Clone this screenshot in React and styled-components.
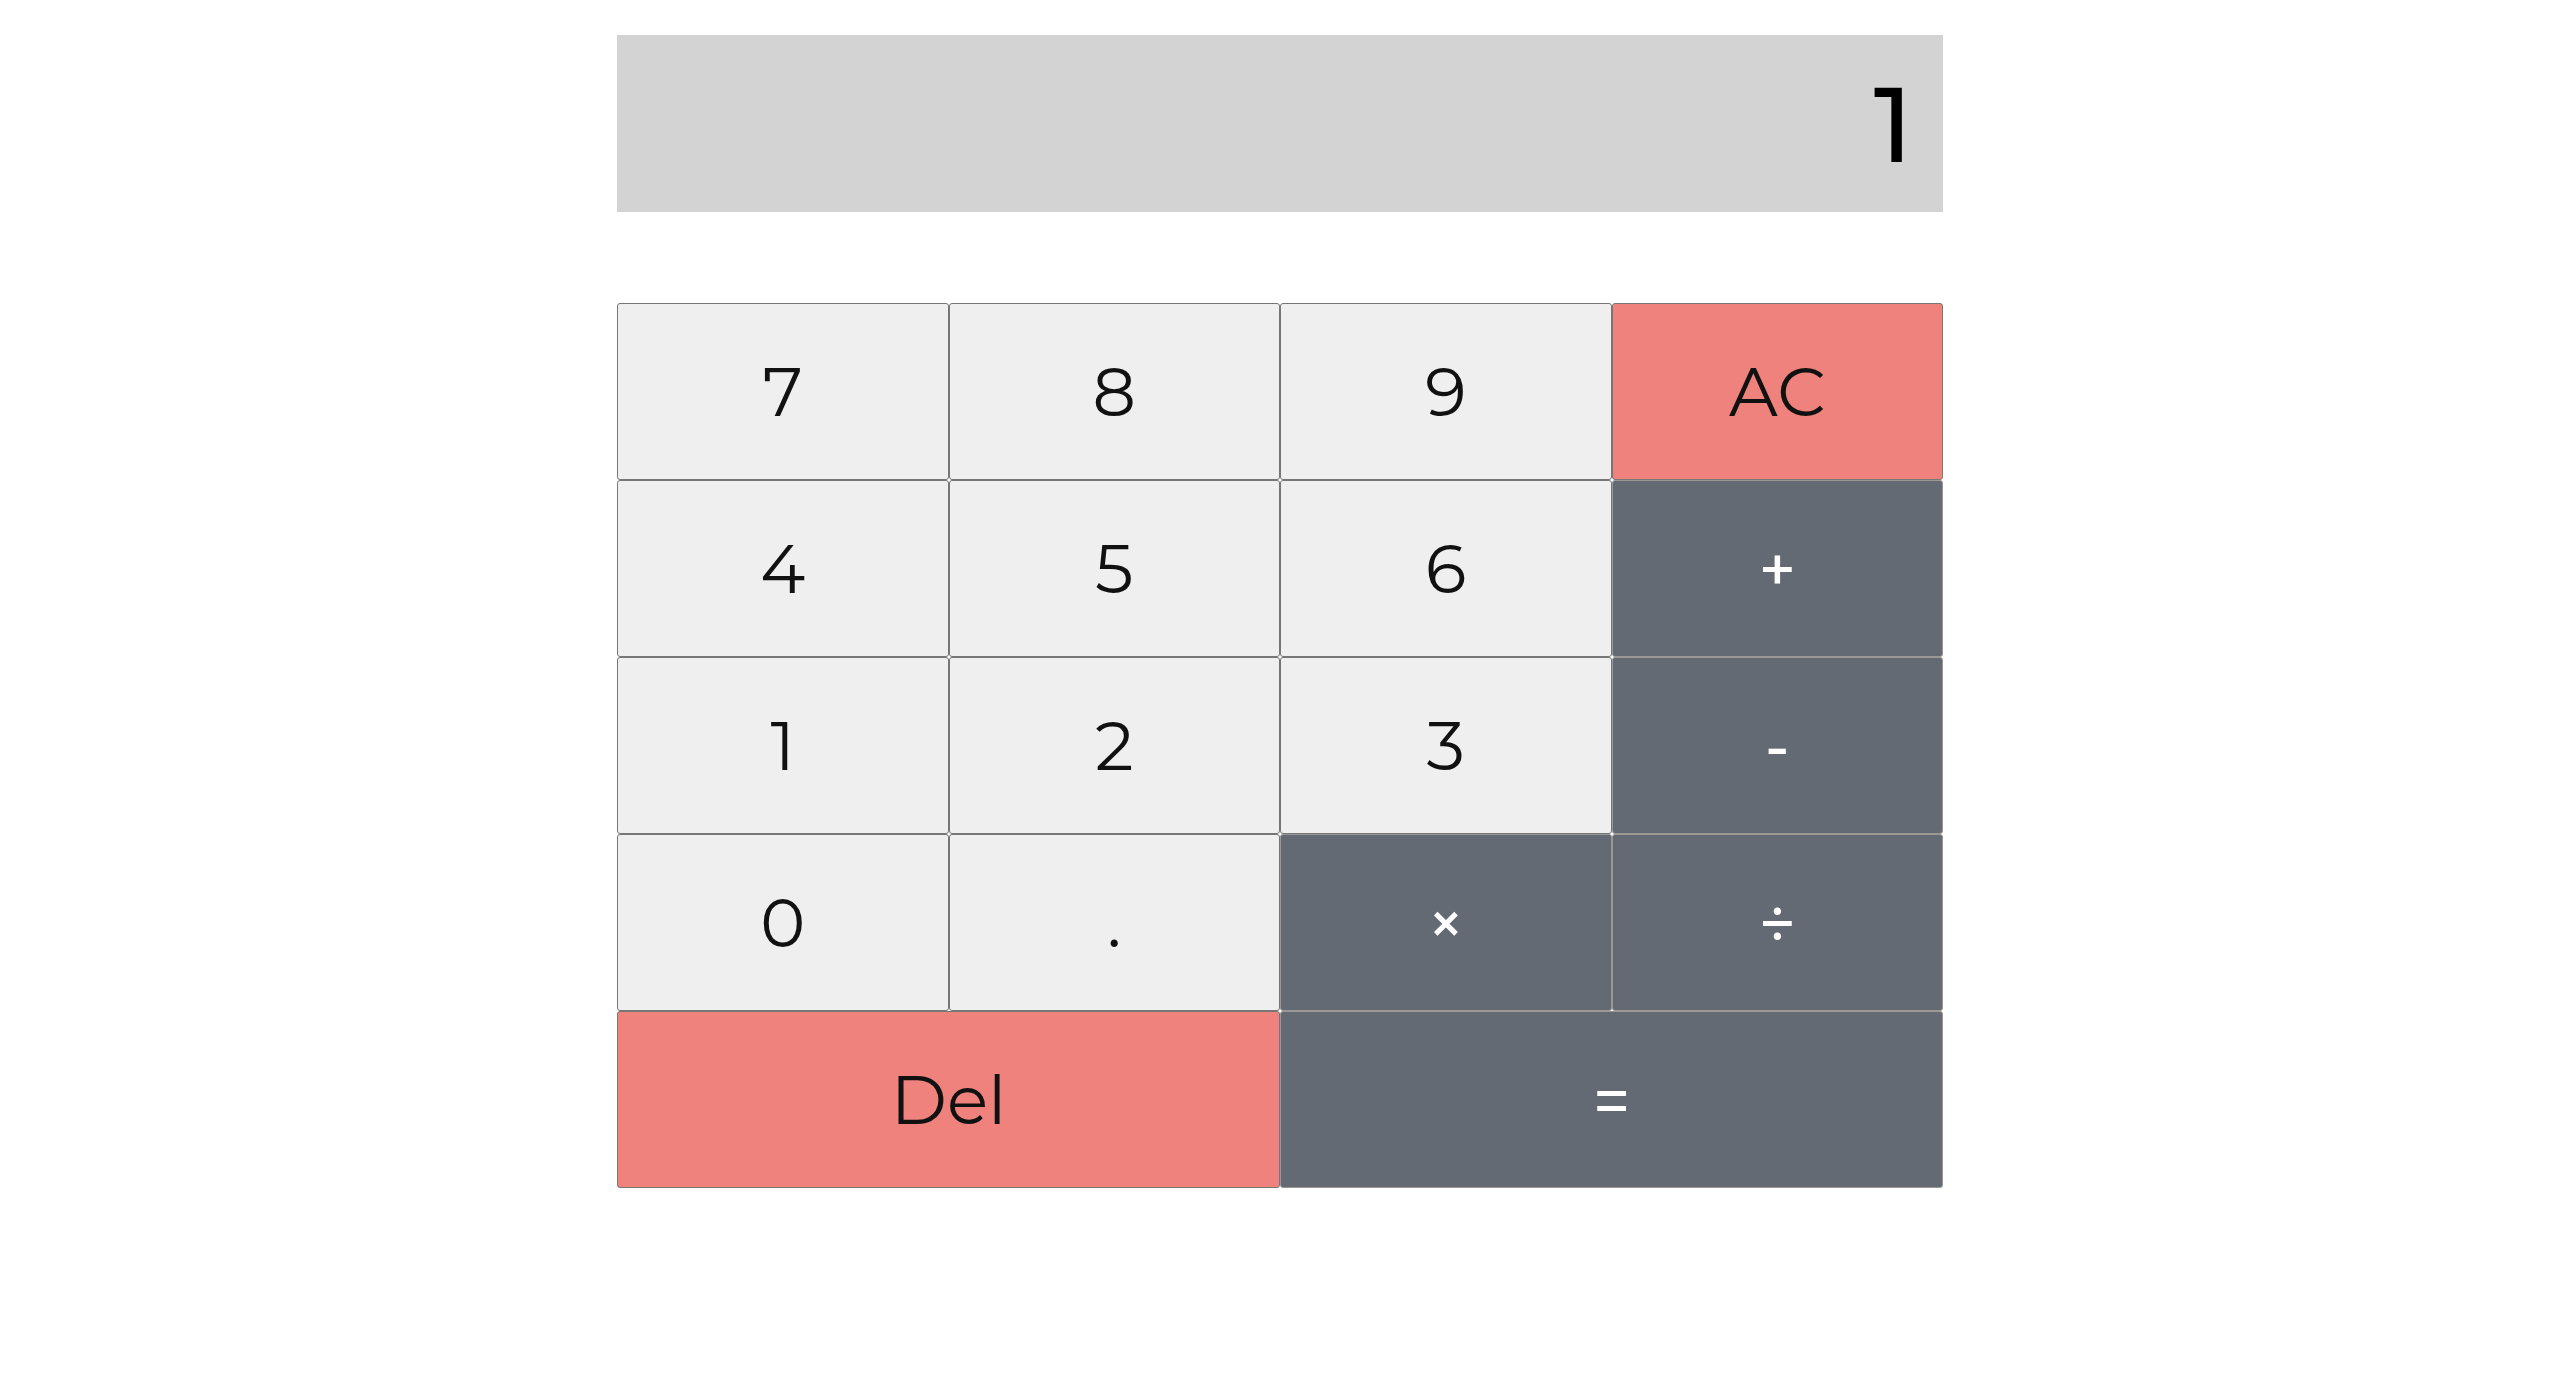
import React, { useState } from "react";
import styled, { createGlobalStyle } from "styled-components";

const GlobalStyle = createGlobalStyle`
    body {
        margin: 0;
        background: #fff;
        font-family: "Montserrat", "Inter", "Liberation Sans", sans-serif;
    }
`;

const Wrapper = styled.div`
    width: 1326px;
    margin: 35px auto 0;
`;

const Display = styled.div`
    height: 177px;
    background: #d3d3d3;
    display: flex;
    align-items: center;
    justify-content: flex-end;
    padding: 0 30px;
    box-sizing: border-box;
    font-size: 106px;
    font-weight: 500;
    color: #000;
    margin-bottom: 91px;
`;

const Keypad = styled.div`
    display: grid;
    grid-template-columns: repeat(4, 1fr);
    grid-auto-rows: 177px;
`;

const colors = {
    num: { bg: "#efefef", fg: "#111", line: "#767676" },
    op: { bg: "#646a73", fg: "#fff", line: "#9a9794" },
    warn: { bg: "#ef827d", fg: "#111", line: "#767676" }
};

const Key = styled.button`
    grid-column: span ${(p) => p.span || 1};
    background: ${(p) => colors[p.kind].bg};
    color: ${(p) => colors[p.kind].fg};
    border: 1px solid ${(p) => colors[p.kind].line};
    border-radius: 3px;
    font-family: inherit;
    font-size: ${(p) => (p.kind === "op" ? "64px" : "68px")};
    font-weight: ${(p) => (p.kind === "op" ? 500 : 400)};
    cursor: pointer;
    padding: 0;
`;

const keys = [
    { label: "7", kind: "num" },
    { label: "8", kind: "num" },
    { label: "9", kind: "num" },
    { label: "AC", kind: "warn" },
    { label: "4", kind: "num" },
    { label: "5", kind: "num" },
    { label: "6", kind: "num" },
    { label: "+", kind: "op" },
    { label: "1", kind: "num" },
    { label: "2", kind: "num" },
    { label: "3", kind: "num" },
    { label: "-", kind: "op" },
    { label: "0", kind: "num" },
    { label: ".", kind: "num" },
    { label: "×", kind: "op" },
    { label: "÷", kind: "op" },
    { label: "Del", kind: "warn", span: 2 },
    { label: "=", kind: "op", span: 2 }
];

const App = () => {
    const [value, setValue] = useState("1");

    const onPress = (label) => {
        if (label === "AC") setValue("0");
        else if (label === "Del") setValue(value.length > 1 ? value.slice(0, -1) : "0");
        else if (label !== "=") setValue(value === "0" ? label : value + label);
    };

    return (
        <>
            <GlobalStyle />
            <Wrapper>
                <Display>{value}</Display>
                <Keypad>
                    {keys.map((k) => (
                        <Key key={k.label} kind={k.kind} span={k.span} onClick={() => onPress(k.label)}>
                            {k.label}
                        </Key>
                    ))}
                </Keypad>
            </Wrapper>
        </>
    );
};

export default App;
